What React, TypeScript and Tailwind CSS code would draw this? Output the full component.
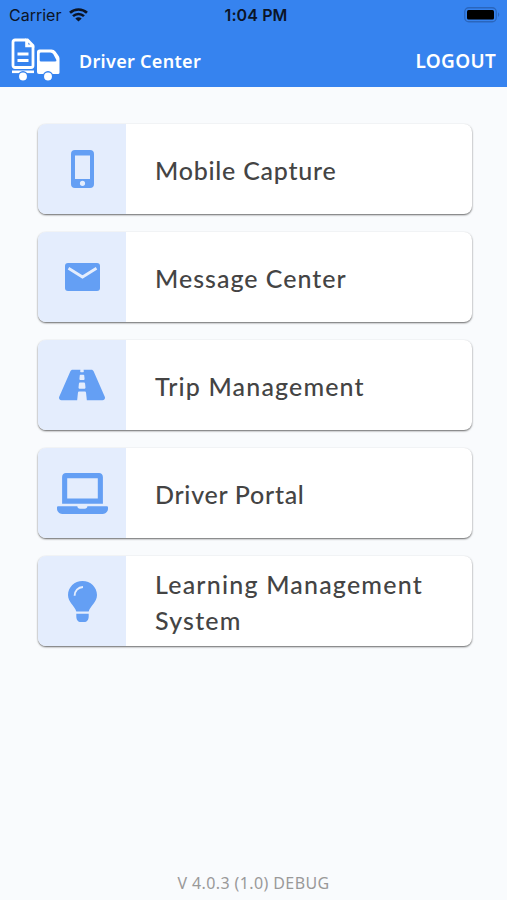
import type { ReactNode } from 'react';
import { FaLaptop, FaRoad } from 'react-icons/fa';

const PhoneIcon = () => (
  <svg width="23" height="38" viewBox="0 0 23 38" fill="currentColor">
    <path
      fillRule="evenodd"
      d="M4 0h15a4 4 0 0 1 4 4v30a4 4 0 0 1-4 4H4a4 4 0 0 1-4-4V4a4 4 0 0 1 4-4zM4 5.5V29h15V5.5zM11.5 30.7a2.6 2.6 0 1 0 0 5.2 2.6 2.6 0 0 0 0-5.2z"
    />
  </svg>
);

const MailIcon = () => (
  <svg width="35" height="28" viewBox="0 0 35 28">
    <rect width="35" height="28" rx="3" fill="currentColor" />
    <path d="M3.5 5.2 17.5 14 31.5 5.2" fill="none" stroke="#e4edfd" strokeWidth="2.8" />
  </svg>
);

const BulbIcon = () => (
  <svg width="29" height="41" viewBox="0 0 29 41">
    <path
      fill="currentColor"
      d="M14.5 0C22.5 0 29 6.2 29 14c0 7-6.500 10.500-8.300 16.500H8.300C6.500 24.500 0 21 0 14 0 6.200 6.500 0 14.500 0z"
    />
    <path fill="currentColor" d="M8.3 32.8h12.4v2.4c0 3.600-1.800 5.800-4.500 5.800h-3.400c-2.700 0-4.500-2.200-4.500-5.800z" />
    <path d="M6.6 14.8c0-5 3.5-8.6 8.4-8.8" fill="none" stroke="#e4edfd" strokeWidth="1.9" />
  </svg>
);

const TruckLogo = () => (
  <svg width="50" height="44" viewBox="0 0 50 44" fill="none" stroke="#fff">
    <path d="M5 2h12.500L23 7.500V27.500a2 2 0 0 1-2 2H5a2 2 0 0 1-2-2V4a2 2 0 0 1 2-2z" strokeWidth="2.8" />
    <path d="M16 2v6.500h7z" fill="#fff" strokeWidth="1.6" />
    <path d="M18.300 4.500v2h2z" fill="#3683ef" stroke="none" />
    <path d="M7.500 16h11M7.500 22.500h11" strokeWidth="3" />
    <path d="M2 33.800h22" strokeWidth="2.6" />
    <path
      fill="#fff"
      fillRule="evenodd"
      stroke="none"
      d="M29.5 11.500h12q2.500 0 4 2l2.500 3.500q1.500 1.500 1.500 3.500v14q0 1.500-1.500 1.500H29q-2 0-2-2V14q0-2.500 2.500-2.500zM31 14.500q-1.300 0-1.300 1.300v6.400q0 1.300 1.300 1.300h14q1.700 0 1.400-1.500l-3.200-6q-1-1.500-3-1.500z"
    />
    <circle cx="13" cy="38.500" r="4.700" fill="#fff" stroke="#3683ef" strokeWidth="1.500" />
    <circle cx="38" cy="38.500" r="4.700" fill="#fff" stroke="#3683ef" strokeWidth="1.500" />
  </svg>
);

const WifiIcon = () => (
  <svg width="19" height="14" viewBox="0 0 19 14" fill="none" stroke="#0b1426" strokeWidth="2.6">
    <path d="M1 4.8C5.7.3 13.3.3 18 4.8" />
    <path d="M4 8.1c3.1-2.9 7.9-2.9 11 0" />
    <path d="M9.5 13.5 6.3 10.4q3.2-2.5 6.4 0z" fill="#0b1426" stroke="none" />
  </svg>
);

const BatteryIcon = () => (
  <svg width="37" height="16" viewBox="0 0 37 16">
    <rect x=".75" y=".75" width="31.5" height="14" rx="4" fill="none" stroke="#2a66bd" strokeWidth="1.3" />
    <rect x="3" y="3" width="27" height="9.5" rx="1.5" fill="#000" />
    <path d="M34 5.3q2.5 2.3 0 4.8z" fill="#2a66bd" />
  </svg>
);

type MenuItem = {
  label: string;
  icon: ReactNode;
  tracking: string;
};

const items: MenuItem[] = [
  { label: 'Mobile Capture', icon: <PhoneIcon />, tracking: 'tracking-[0.76px]' },
  { label: 'Message Center', icon: <MailIcon />, tracking: 'tracking-[1px]' },
  { label: 'Trip Management', icon: <FaRoad size={46} />, tracking: 'tracking-[1.15px]' },
  { label: 'Driver Portal', icon: <FaLaptop size={51} />, tracking: 'tracking-[0.72px]' },
  { label: 'Learning Management System', icon: <BulbIcon />, tracking: 'tracking-[1.2px]' },
];

const MenuCard = ({ label, icon, tracking }: MenuItem) => (
  <button className="flex h-[90px] w-full overflow-hidden rounded-lg bg-white text-left shadow-[0_1px_2px_rgba(0,0,0,0.6)]">
    <span className="flex w-[88px] shrink-0 items-center justify-center self-stretch bg-[#e4edfd] text-[#649ff4]">
      {icon}
    </span>
    <span className={`self-center pt-0.5 pr-8 pl-[29px] text-[25px] leading-9 font-medium text-[#444] ${tracking}`}>
      {label}
    </span>
  </button>
);

export default function App() {
  return (
    <div className="flex h-[900px] w-[507px] flex-col bg-[#f9fbfd] font-['Lato',sans-serif]">
      <header className="h-[87px] bg-[#3683ef]">
        <div className="grid h-[30px] grid-cols-3 items-center pr-[6px] pl-[9px] font-['Inter',sans-serif] text-[#0b1426]">
          <div className="flex items-center gap-2 text-[16px]">
            <span>Carrier</span>
            <WifiIcon />
          </div>
          <span className="pl-0.5 text-center text-[16px] font-semibold tracking-[0.1px]">1:04 PM</span>
          <div className="flex justify-end">
            <BatteryIcon />
          </div>
        </div>
        <div className="flex h-[57px] items-center pt-0.5 pr-[11px] pl-[10px] font-['Noto_Sans',sans-serif] text-white">
          <TruckLogo />
          <h1 className="ml-[19px] pt-1 text-[18px] font-semibold tracking-[0.3px]">Driver Center</h1>
          <button className="ml-auto pt-1 text-[19px] font-semibold tracking-[0.3px]">LOGOUT</button>
        </div>
      </header>

      <main className="flex flex-1 flex-col gap-[18px] pt-[37px] pr-[35px] pl-[38px]">
        {items.map((item) => (
          <MenuCard key={item.label} {...item} />
        ))}
      </main>

      <footer className="pb-[5px] text-center font-['Noto_Sans',sans-serif] text-[16px] leading-6 tracking-[0.4px] text-[#999]">
        V 4.0.3 (1.0) DEBUG
      </footer>
    </div>
  );
}
